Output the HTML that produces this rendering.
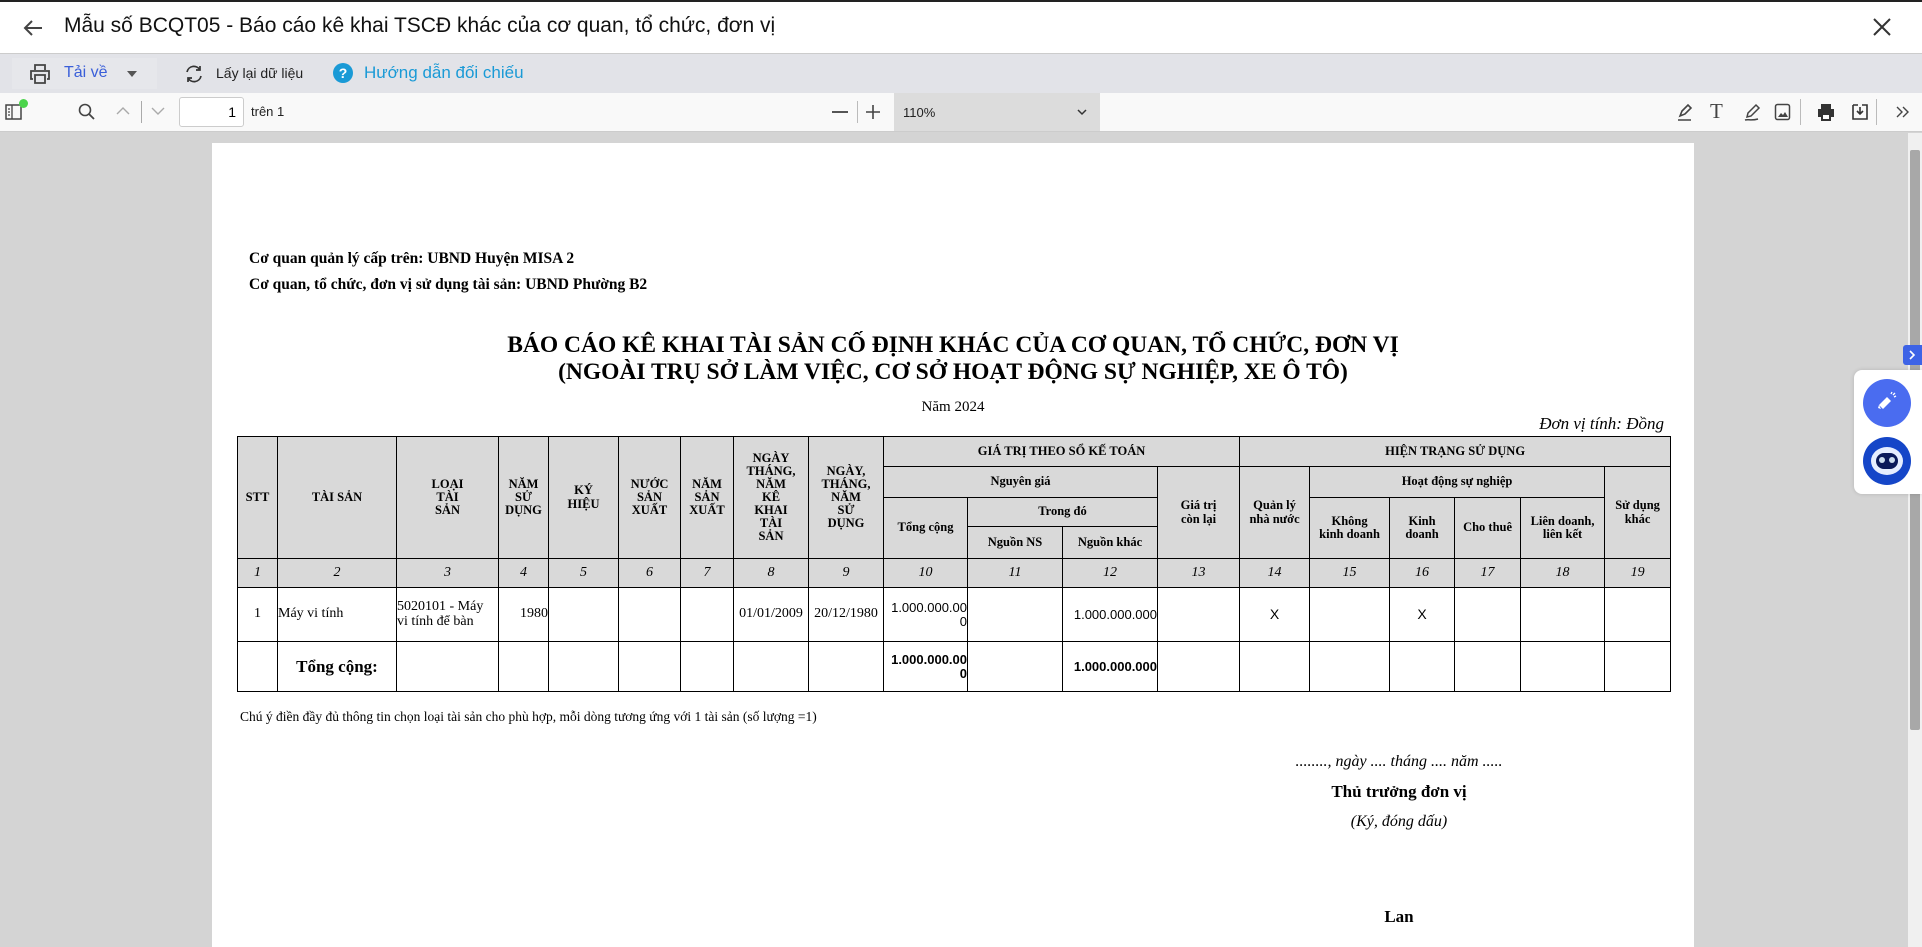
<!DOCTYPE html>
<html><head><meta charset="utf-8">
<style>
*{margin:0;padding:0;box-sizing:border-box}
body{width:1922px;height:947px;overflow:hidden;background:#d4d4d4;font-family:"Liberation Sans",sans-serif;position:relative}
.abs{position:absolute}
#top{left:0;top:0;width:1922px;height:54px;background:#fff;border-top:2px solid #222;border-bottom:1px solid #ccc}
#tb2{left:0;top:54px;width:1922px;height:39px;background:#e2e3e8}
#tb3{left:0;top:93px;width:1922px;height:39px;background:#f9f9f9;border-bottom:1px solid #ccc}
#page{left:212px;top:143px;width:1482px;height:804px;background:#fff}
.serif{font-family:"Liberation Serif",serif}
table{border-collapse:collapse;table-layout:fixed;font-family:"Liberation Serif",serif;position:absolute;left:237px;top:436px;width:1433px}
td{border:1px solid #000;text-align:center;vertical-align:middle;font-size:12.5px;line-height:1.05;overflow:hidden}
.h td{background:#d9d9d9;font-weight:bold}
.n td{background:#d9d9d9;font-style:italic;font-size:14px}
.sans{font-family:"Liberation Sans",sans-serif;font-size:13px}
</style></head><body>
<div id="top" class="abs">
 <svg class="abs" style="left:22px;top:16px" width="22" height="20" viewBox="0 0 22 20"><path d="M20 10H3M10 3L3 10l7 7" stroke="#444" stroke-width="2" fill="none"/></svg>
 <div class="abs" style="left:64px;top:12px;font-size:21px;color:#111">Mẫu số BCQT05 - Báo cáo kê khai TSCĐ khác của cơ quan, tổ chức, đơn vị</div>
 <svg class="abs" style="left:1872px;top:15px" width="20" height="20" viewBox="0 0 20 20"><path d="M2 2L18 18M18 2L2 18" stroke="#333" stroke-width="2"/></svg>
</div>
<div id="tb2" class="abs">
 <div class="abs" style="left:12px;top:4px;width:145px;height:31px;background:#e6e7eb"></div>
 <svg class="abs" style="left:28px;top:8px" width="24" height="24" viewBox="0 0 24 24"><path d="M7 8V3h10v5M5 17H3V9h18v8h-2M7 13h10v8H7z" stroke="#444" stroke-width="1.8" fill="none"/></svg>
 <div class="abs" style="left:64px;top:10px;font-size:16px;color:#3a5fd9">Tải về</div>
 <div class="abs" style="left:127px;top:17px;border:5px solid transparent;border-top:6px solid #555"></div>
 <svg class="abs" style="left:183px;top:9px" width="22" height="22" viewBox="0 0 22 22"><path d="M4 9a7 7 0 0 1 13-2M18 13a7 7 0 0 1-13 2M17 3v4h-4M5 19v-4h4" stroke="#333" stroke-width="1.7" fill="none"/></svg>
 <div class="abs" style="left:216px;top:11px;font-size:14px;color:#222">Lấy lại dữ liệu</div>
 <div class="abs" style="left:333px;top:9px;width:20px;height:20px;border-radius:50%;background:#1a9ad6;color:#fff;font-size:14px;font-weight:bold;text-align:center;line-height:20px">?</div>
 <div class="abs" style="left:364px;top:9px;font-size:17px;color:#1a9ad6">Hướng dẫn đối chiếu</div>
</div>
<div id="tb3" class="abs">
 <svg class="abs" style="left:5px;top:10px" width="18" height="18" viewBox="0 0 18 18"><rect x="1" y="2" width="15" height="14" stroke="#444" stroke-width="1.5" fill="none"/><path d="M7 2v14M3 6h2M3 9h2M3 12h2" stroke="#444" stroke-width="1.3"/></svg>
 <div class="abs" style="left:19px;top:6px;width:9px;height:9px;border-radius:50%;background:#4cd44c"></div>
 <svg class="abs" style="left:78px;top:10px" width="18" height="18" viewBox="0 0 18 18"><circle cx="7" cy="7" r="5.5" stroke="#444" stroke-width="1.6" fill="none"/><path d="M11 11l5 5" stroke="#444" stroke-width="1.8"/></svg>
 <svg class="abs" style="left:115px;top:12px" width="16" height="12"><path d="M2 9l6-6 6 6" stroke="#aaa" stroke-width="1.4" fill="none"/></svg>
 <div class="abs" style="left:141px;top:8px;width:1px;height:22px;background:#aaa"></div>
 <svg class="abs" style="left:150px;top:12px" width="16" height="12"><path d="M2 3l6 6 6-6" stroke="#aaa" stroke-width="1.4" fill="none"/></svg>
 <div class="abs" style="left:179px;top:4px;width:65px;height:30px;background:#fff;border:1px solid #ccc;border-radius:3px;font-size:14px;text-align:right;padding:6px 7px 0 0">1</div>
 <div class="abs" style="left:251px;top:11px;font-size:13px;color:#222">trên 1</div>
 <div class="abs" style="left:832px;top:18px;width:16px;height:1.5px;background:#555"></div>
 <div class="abs" style="left:857px;top:8px;width:1px;height:22px;background:#bbb"></div>
 <svg class="abs" style="left:865px;top:11px" width="16" height="16"><path d="M8 1v14M1 8h14" stroke="#444" stroke-width="1.6"/></svg>
 <div class="abs" style="left:894px;top:0;width:206px;height:38px;background:#dcdcdc"></div>
 <div class="abs" style="left:903px;top:12px;font-size:13px;color:#222">110%</div>
 <svg class="abs" style="left:1076px;top:14px" width="12" height="10"><path d="M2 3l4 4 4-4" stroke="#333" stroke-width="1.5" fill="none"/></svg>
 <svg class="abs" style="left:1675px;top:9px" width="20" height="20" viewBox="0 0 20 20"><path d="M5 14l2-5 6-6 3 3-6 6zM3 18h13" stroke="#444" stroke-width="1.6" fill="none"/></svg>
 <div class="abs" style="left:1710px;top:6px;font-size:21px;color:#444;font-family:'Liberation Serif',serif">T</div>
 <svg class="abs" style="left:1742px;top:9px" width="20" height="20" viewBox="0 0 20 20"><path d="M5 15l1-4 8-8 3 3-8 8zM3 18c3-1 6 1 13-1" stroke="#444" stroke-width="1.5" fill="none"/></svg>
 <svg class="abs" style="left:1774px;top:10px" width="18" height="18"><rect x="1.5" y="1.5" width="14" height="15" rx="2" stroke="#444" stroke-width="1.5" fill="none"/><path d="M4 14l3-4 2 2 2-3 3 5z" fill="#444"/></svg>
 <div class="abs" style="left:1800px;top:6px;width:1px;height:26px;background:#bbb"></div>
 <svg class="abs" style="left:1816px;top:9px" width="20" height="20" viewBox="0 0 20 20"><path d="M5 2h10v5H5zM2 7h16v8h-3v4H5v-4H2z" fill="#333"/><rect x="7" y="13" width="6" height="4" fill="#fff"/></svg>
 <svg class="abs" style="left:1850px;top:9px" width="20" height="20" viewBox="0 0 20 20"><path d="M3 3h5M12 3h5v14H3V3M10 5v7M7 9l3 3 3-3" stroke="#333" stroke-width="1.6" fill="none"/></svg>
 <div class="abs" style="left:1876px;top:6px;width:1px;height:26px;background:#bbb"></div>
 <svg class="abs" style="left:1895px;top:12px" width="16" height="14"><path d="M2 2l5 5-5 5M8 2l5 5-5 5" stroke="#444" stroke-width="1.4" fill="none"/></svg>
</div>
<div class="abs" style="left:1908px;top:133px;width:14px;height:814px;background:#f0f0f0"></div>
<div class="abs" style="left:1910px;top:150px;width:10px;height:580px;background:#a8a8a8;border-radius:2px"></div>

<div id="page" class="abs"></div>
<div class="abs serif" style="left:249px;top:246px;font-size:15.5px;font-weight:bold;line-height:26px">Cơ quan quản lý cấp trên: UBND Huyện MISA 2<br>Cơ quan, tổ chức, đơn vị sử dụng tài sản: UBND Phường B2</div>
<div class="abs serif" style="left:212px;width:1482px;top:332px;text-align:center;font-size:23.5px;font-weight:bold;line-height:27px">BÁO CÁO KÊ KHAI TÀI SẢN CỐ ĐỊNH KHÁC CỦA CƠ QUAN, TỔ CHỨC, ĐƠN VỊ<br>(NGOÀI TRỤ SỞ LÀM VIỆC, CƠ SỞ HOẠT ĐỘNG SỰ NGHIỆP, XE Ô TÔ)</div>
<div class="abs serif" style="left:212px;width:1482px;top:399px;text-align:center;font-size:15px">Năm 2024</div>
<div class="abs serif" style="left:1400px;top:414px;text-align:right;font-size:17px;font-style:italic;width:264px">Đơn vị tính: Đồng</div>

<table>
<colgroup><col style="width:40px"><col style="width:119px"><col style="width:102px"><col style="width:50px"><col style="width:70px"><col style="width:62px"><col style="width:53px"><col style="width:75px"><col style="width:75px"><col style="width:84px"><col style="width:95px"><col style="width:95px"><col style="width:82px"><col style="width:70px"><col style="width:80px"><col style="width:65px"><col style="width:66px"><col style="width:84px"><col style="width:66px"></colgroup>
<tr class="h" style="height:30px"><td rowspan="4">STT</td><td rowspan="4">TÀI SẢN</td><td rowspan="4">LOẠI<br>TÀI<br>SẢN</td><td rowspan="4">NĂM<br>SỬ<br>DỤNG</td><td rowspan="4">KÝ<br>HIỆU</td><td rowspan="4">NƯỚC<br>SẢN<br>XUẤT</td><td rowspan="4">NĂM<br>SẢN<br>XUẤT</td><td rowspan="4">NGÀY<br>THÁNG,<br>NĂM<br>KÊ<br>KHAI<br>TÀI<br>SẢN</td><td rowspan="4">NGÀY,<br>THÁNG,<br>NĂM<br>SỬ<br>DỤNG</td><td colspan="4">GIÁ TRỊ THEO SỔ KẾ TOÁN</td><td colspan="6">HIỆN TRẠNG SỬ DỤNG</td></tr>
<tr class="h" style="height:31px"><td colspan="3">Nguyên giá</td><td rowspan="3">Giá trị<br>còn lại</td><td rowspan="3">Quản lý<br>nhà nước</td><td colspan="4">Hoạt động sự nghiệp</td><td rowspan="3">Sử dụng<br>khác</td></tr>
<tr class="h" style="height:29px"><td rowspan="2">Tổng cộng</td><td colspan="2">Trong đó</td><td rowspan="2">Không<br>kinh doanh</td><td rowspan="2">Kinh<br>doanh</td><td rowspan="2">Cho thuê</td><td rowspan="2">Liên doanh,<br>liên kết</td></tr>
<tr class="h" style="height:32px"><td>Nguồn NS</td><td>Nguồn khác</td></tr>
<tr class="n" style="height:29px"><td>1</td><td>2</td><td>3</td><td>4</td><td>5</td><td>6</td><td>7</td><td>8</td><td>9</td><td>10</td><td>11</td><td>12</td><td>13</td><td>14</td><td>15</td><td>16</td><td>17</td><td>18</td><td>19</td></tr>
<tr style="height:54px"><td style="font-size:14px">1</td><td style="text-align:left;font-size:14px">Máy vi tính</td><td style="text-align:left;font-size:14px">5020101 - Máy<br>vi tính để bàn</td><td style="text-align:right;font-size:14px">1980</td><td></td><td></td><td></td><td style="font-size:14px">01/01/2009</td><td style="font-size:14px">20/12/1980</td><td class="sans" style="text-align:right">1.000.000.00<br>0</td><td></td><td class="sans" style="text-align:right">1.000.000.000</td><td></td><td class="sans" style="font-size:14px">X</td><td></td><td class="sans" style="font-size:14px">X</td><td></td><td></td><td></td></tr>
<tr style="height:50px;border-top:1.5px solid #222"><td></td><td style="font-weight:bold;font-size:17px">Tổng cộng:</td><td></td><td></td><td></td><td></td><td></td><td></td><td></td><td class="sans" style="text-align:right;font-weight:bold">1.000.000.00<br>0</td><td></td><td class="sans" style="text-align:right;font-weight:bold">1.000.000.000</td><td></td><td></td><td></td><td></td><td></td><td></td><td></td></tr>
</table>

<div class="abs serif" style="left:240px;top:709px;font-size:13.5px">Chú ý điền đầy đủ thông tin chọn loại tài sản cho phù hợp, mỗi dòng tương ứng với 1 tài sản (số lượng =1)</div>
<div class="abs serif" style="left:1199px;width:400px;top:753px;text-align:center;font-size:16px;font-style:italic">........, ngày .... tháng .... năm .....</div>
<div class="abs serif" style="left:1199px;width:400px;top:782px;text-align:center;font-size:17px;font-weight:bold">Thủ trưởng đơn vị</div>
<div class="abs serif" style="left:1199px;width:400px;top:813px;text-align:center;font-size:16px;font-style:italic">(Ký, đóng dấu)</div>
<div class="abs serif" style="left:1199px;width:400px;top:907px;text-align:center;font-size:17px;font-weight:bold">Lan</div>

<div class="abs" style="left:1903px;top:345px;width:19px;height:20px;background:#3d63e6;border-radius:3px 0 0 3px"></div>
<svg class="abs" style="left:1906px;top:349px" width="12" height="12"><path d="M4 2l4 4-4 4" stroke="#fff" stroke-width="1.6" fill="none"/></svg>
<div class="abs" style="left:1854px;top:370px;width:68px;height:124px;background:#fff;border-radius:8px 0 0 8px;box-shadow:0 0 4px rgba(0,0,0,.15)"></div>
<div class="abs" style="left:1863px;top:379px;width:48px;height:48px;border-radius:50%;background:#4a6cf0"></div>
<svg class="abs" style="left:1875px;top:391px" width="24" height="24" viewBox="0 0 24 24"><path d="M4 14l8-8 4 4-8 8zM4 14l-1 3 3 1" fill="#fff"/><path d="M16 3l1-2M19 6l2-1M18 4l2-2" stroke="#fff" stroke-width="1.3"/></svg>
<div class="abs" style="left:1863px;top:437px;width:48px;height:48px;border-radius:50%;background:#1546c8"></div>
<div class="abs" style="left:1871px;top:447px;width:32px;height:28px;border-radius:50%;background:#e6eeff"></div>
<div class="abs" style="left:1876px;top:453px;width:22px;height:16px;border-radius:8px;background:#0b1a5a"></div>
<div class="abs" style="left:1879px;top:457px;width:6px;height:6px;border-radius:50%;background:#cde"></div>
<div class="abs" style="left:1889px;top:457px;width:6px;height:6px;border-radius:50%;background:#cde"></div>
</body></html>
